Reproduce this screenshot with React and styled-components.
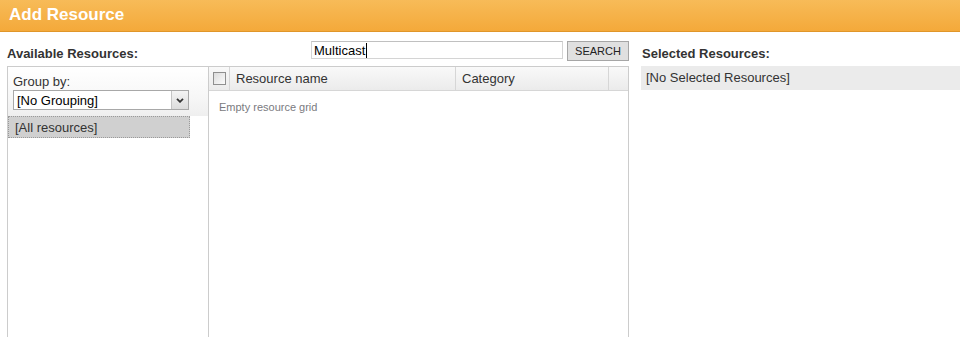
import React from "react";
import styled, { createGlobalStyle } from "styled-components";

const Global = createGlobalStyle`
  html, body { margin: 0; padding: 0; background: #fff; }
  body { font-family: "Liberation Sans", Arial, sans-serif; color: #333; }
  * { box-sizing: border-box; }
`;

const Page = styled.div`
  width: 960px;
  height: 337px;
  overflow: hidden;
  display: flex;
  flex-direction: column;
`;

const Header = styled.div`
  height: 32px;
  background: linear-gradient(#f7bb58, #f4a93a);
  border-bottom: 1px solid #e0962a;
  color: #fff;
  font-weight: bold;
  font-size: 17px;
  padding: 5px 0 0 9px;
`;

const Body = styled.div`
  flex: 1;
  display: flex;
  padding: 8px 0 0 7px;
  min-height: 0;
`;

const LeftArea = styled.div`
  width: 622px;
  display: flex;
  flex-direction: column;
`;

const TopRow = styled.div`
  height: 26px;
  display: flex;
  align-items: flex-start;
`;

const SectionTitle = styled.div`
  font-size: 13px;
  font-weight: bold;
  color: #333;
  padding-top: 6px;
  padding-left: ${(p) => p.$pl || 0}px;
`;

const SearchBox = styled.div`
  margin-left: auto;
  display: flex;
  gap: 4px;
  padding-top: 1px;
`;

const SearchInput = styled.div`
  width: 252px;
  height: 18px;
  border: 1px solid #d4d4d4;
  border-top-color: #c0c0c0;
  font-size: 13px;
  color: #000;
  padding: 1px 0 0 2px;
  display: flex;
  align-items: center;
`;

const Caret = styled.span`
  display: inline-block;
  width: 1px;
  height: 15px;
  background: #000;
  margin-left: 1px;
`;

const SearchButton = styled.div`
  width: 62px;
  height: 20px;
  background: #e0e0e0;
  border: 1px solid #a6a6a6;
  font-size: 11px;
  color: #222;
  display: flex;
  align-items: center;
  justify-content: center;
`;

const Panel = styled.div`
  flex: 1;
  border: 1px solid #cccccc;
  border-bottom: none;
  display: flex;
  min-height: 0;
`;

const GroupCol = styled.div`
  width: 201px;
  border-right: 1px solid #cccccc;
  display: flex;
  flex-direction: column;
`;

const GroupHead = styled.div`
  height: 49px;
  background: linear-gradient(#ffffff 0%, #f7f7f7 60%, #efefef 100%);
  padding: 7px 0 0 5px;
`;

const GroupLabel = styled.div`
  font-size: 13px;
  color: #333;
  margin-bottom: 1px;
`;

const Select = styled.div`
  width: 176px;
  height: 20px;
  border: 1px solid #a8a8a8;
  background: #fff;
  display: flex;
  align-items: stretch;
`;

const SelectText = styled.div`
  flex: 1;
  font-size: 13px;
  color: #000;
  padding: 2px 0 0 3px;
`;

const SelectArrow = styled.div`
  width: 17px;
  border-left: 1px solid #c4c4c4;
  background: linear-gradient(#f4f4f4, #dcdcdc);
  display: flex;
  align-items: center;
  justify-content: center;
`;

const GroupItem = styled.div`
  width: 182px;
  height: 22px;
  background: #d0d0d0;
  border: 1px dotted #9a9a9a;
  font-size: 13px;
  color: #333;
  padding: 3px 0 0 6px;
`;

const GridCol = styled.div`
  flex: 1;
  display: flex;
  flex-direction: column;
`;

const GridHead = styled.div`
  height: 24px;
  display: flex;
  background: linear-gradient(#f9f9f9, #ebebeb);
  border-bottom: 1px solid #d6d6d6;
`;

const HeadCell = styled.div`
  width: ${(p) => p.$w}px;
  flex: ${(p) => (p.$grow ? 1 : "none")};
  border-right: ${(p) => (p.$last ? "none" : "1px solid #d6d6d6")};
  font-size: 13px;
  color: #333;
  display: flex;
  align-items: center;
  padding-left: ${(p) => p.$pl || 0}px;
  justify-content: ${(p) => (p.$center ? "center" : "flex-start")};
`;

const CheckBox = styled.div`
  width: 13px;
  height: 13px;
  border: 1px solid #8f8f8f;
  background: linear-gradient(135deg, #dcdcdc, #fbfbfb);
`;

const EmptyText = styled.div`
  font-size: 11px;
  color: #7a7a80;
  padding: 10px 0 0 10px;
`;

const RightArea = styled.div`
  flex: 1;
  padding-left: 12px;
  display: flex;
  flex-direction: column;
`;

const SelectedRow = styled.div`
  height: 24px;
  margin-top: 5px;
  background: #ebebeb;
  font-size: 13px;
  color: #333;
  padding: 4px 0 0 5px;
`;

export default function App() {
  return (
    <Page>
      <Global />
      <Header>Add Resource</Header>
      <Body>
        <LeftArea>
          <TopRow>
            <SectionTitle>Available Resources:</SectionTitle>
            <SearchBox>
              <SearchInput>
                Multicast<Caret />
              </SearchInput>
              <SearchButton>SEARCH</SearchButton>
            </SearchBox>
          </TopRow>
          <Panel>
            <GroupCol>
              <GroupHead>
                <GroupLabel>Group by:</GroupLabel>
                <Select>
                  <SelectText>[No Grouping]</SelectText>
                  <SelectArrow>
                    <svg width="8" height="5" viewBox="0 0 8 5">
                      <path d="M1 0.8 L4 3.8 L7 0.8" stroke="#333" strokeWidth="1.8" fill="none" />
                    </svg>
                  </SelectArrow>
                </Select>
              </GroupHead>
              <GroupItem>[All resources]</GroupItem>
            </GroupCol>
            <GridCol>
              <GridHead>
                <HeadCell $w={21} $center>
                  <CheckBox />
                </HeadCell>
                <HeadCell $w={226} $pl={6}>Resource name</HeadCell>
                <HeadCell $w={153} $pl={6}>Category</HeadCell>
                <HeadCell $grow $last />
              </GridHead>
              <EmptyText>Empty resource grid</EmptyText>
            </GridCol>
          </Panel>
        </LeftArea>
        <RightArea>
          <SectionTitle $pl={1}>Selected Resources:</SectionTitle>
          <SelectedRow>[No Selected Resources]</SelectedRow>
        </RightArea>
      </Body>
    </Page>
  );
}
